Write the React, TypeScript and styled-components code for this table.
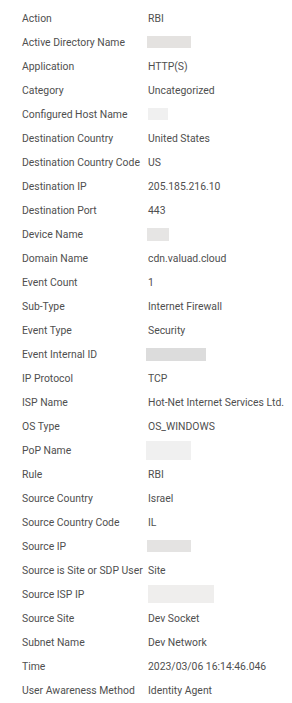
import styled, { createGlobalStyle } from "styled-components";

const GlobalStyle = createGlobalStyle`
  body {
    margin: 0;
    background: #ffffff;
    font-family: Roboto, "Liberation Sans", Arial, sans-serif;
  }
`;

const List = styled.div`
  padding: 6px 0 0 22px;
  display: flex;
  flex-direction: column;
`;

const Row = styled.div`
  display: grid;
  grid-template-columns: 126px 1fr;
  height: 24px;
  align-items: center;
  font-size: 10.4px;
  color: #4f4f4f;
  white-space: nowrap;
`;

const Label = styled.span``;

const Value = styled.span`
  display: flex;
  align-items: center;
`;

const Redacted = styled.span<{ $w: number; $h: number; $bg: string; $dx?: number }>`
  display: inline-block;
  width: ${(p) => p.$w}px;
  height: ${(p) => p.$h}px;
  background: ${(p) => p.$bg};
  margin-left: ${(p) => p.$dx ?? 0}px;
`;

type Item = {
  label: string;
  value?: string;
  box?: { w: number; h: number; bg: string; dx?: number };
};

const items: Item[] = [
  { label: "Action", value: "RBI" },
  { label: "Active Directory Name", box: { w: 44, h: 12, bg: "#e4e2e0", dx: -1 } },
  { label: "Application", value: "HTTP(S)" },
  { label: "Category", value: "Uncategorized" },
  { label: "Configured Host Name", box: { w: 20, h: 12, bg: "#f0f0f0" } },
  { label: "Destination Country", value: "United States" },
  { label: "Destination Country Code", value: "US" },
  { label: "Destination IP", value: "205.185.216.10" },
  { label: "Destination Port", value: "443" },
  { label: "Device Name", box: { w: 22, h: 13, bg: "#e6e5e4", dx: -1 } },
  { label: "Domain Name", value: "cdn.valuad.cloud" },
  { label: "Event Count", value: "1" },
  { label: "Sub-Type", value: "Internet Firewall" },
  { label: "Event Type", value: "Security" },
  { label: "Event Internal ID", box: { w: 60, h: 13, bg: "#dcdcdc", dx: -2 } },
  { label: "IP Protocol", value: "TCP" },
  { label: "ISP Name", value: "Hot-Net Internet Services Ltd." },
  { label: "OS Type", value: "OS_WINDOWS" },
  { label: "PoP Name", box: { w: 45, h: 19, bg: "#f0f0f0", dx: -2 } },
  { label: "Rule", value: "RBI" },
  { label: "Source Country", value: "Israel" },
  { label: "Source Country Code", value: "IL" },
  { label: "Source IP", box: { w: 44, h: 12, bg: "#e4e3e2", dx: -1 } },
  { label: "Source is Site or SDP User", value: "Site" },
  { label: "Source ISP IP", box: { w: 66, h: 18, bg: "#efeeed" } },
  { label: "Source Site", value: "Dev Socket" },
  { label: "Subnet Name", value: "Dev Network" },
  { label: "Time", value: "2023/03/06 16:14:46.046" },
  { label: "User Awareness Method", value: "Identity Agent" },
];

export default function App() {
  return (
    <>
      <GlobalStyle />
      <List>
        {items.map((item) => (
          <Row key={item.label}>
            <Label>{item.label}</Label>
            <Value>
              {item.box ? (
                <Redacted $w={item.box.w} $h={item.box.h} $bg={item.box.bg} $dx={item.box.dx} />
              ) : (
                item.value
              )}
            </Value>
          </Row>
        ))}
      </List>
    </>
  );
}
